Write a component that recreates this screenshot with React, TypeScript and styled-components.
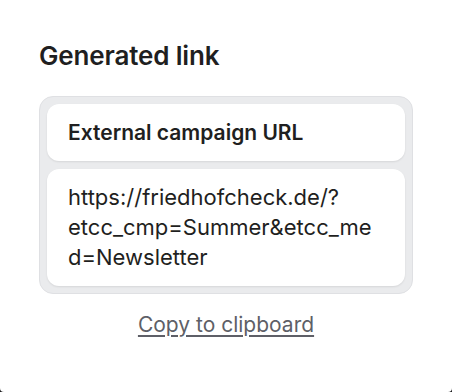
import styled, { createGlobalStyle } from 'styled-components';

const GlobalStyle = createGlobalStyle`
  html, body {
    margin: 0;
    padding: 0;
    background: #1c1c1e;
  }
  body {
    font-family: Inter, 'Noto Sans', sans-serif;
    -webkit-font-smoothing: antialiased;
  }
`;

const Panel = styled.div`
  box-sizing: border-box;
  width: 452px;
  height: 392px;
  background: #ffffff;
  border-radius: 0 0 4px 4px;
  padding: 40px 39px 0;
  display: flex;
  flex-direction: column;
`;

const Title = styled.h2`
  margin: 0;
  font-size: 26px;
  line-height: 32px;
  font-weight: 600;
  color: #1f1f21;
  letter-spacing: -0.15px;
`;

const Group = styled.div`
  margin-top: 24px;
  display: flex;
  flex-direction: column;
  gap: 8px;
  padding: 7px;
  background: #eaebed;
  border: 1px solid #dfe0e3;
  border-radius: 14px;
`;

const Card = styled.div<{ $tall?: boolean }>`
  background: #ffffff;
  border-radius: 12px;
  box-shadow: 0 1px 2px rgba(0, 0, 0, 0.09);
  padding: ${(p) => (p.$tall ? '13px 21px 14px' : '0 21px')};
  height: ${(p) => (p.$tall ? 'auto' : '57px')};
  display: flex;
  align-items: center;
  box-sizing: border-box;
`;

const Label = styled.span`
  font-size: 21px;
  font-weight: 600;
  color: #1f1f21;
`;

const Url = styled.span`
  font-size: 22px;
  line-height: 30px;
  color: #1f1f21;
  overflow-wrap: anywhere;
  min-width: 0;
`;

const CopyLink = styled.a`
  align-self: center;
  margin-top: 18px;
  font-size: 21px;
  line-height: 25px;
  color: #5e5f67;
  text-decoration: underline;
  text-underline-offset: 3px;
  text-decoration-thickness: 1.5px;
  cursor: pointer;
`;

export default function App() {
  return (
    <>
      <GlobalStyle />
      <Panel>
        <Title>Generated link</Title>
        <Group>
          <Card>
            <Label>External campaign URL</Label>
          </Card>
          <Card $tall>
            <Url>https://friedhofcheck.de/?etcc_cmp=Summer&amp;etcc_med=Newsletter</Url>
          </Card>
        </Group>
        <CopyLink>Copy to clipboard</CopyLink>
      </Panel>
    </>
  );
}
